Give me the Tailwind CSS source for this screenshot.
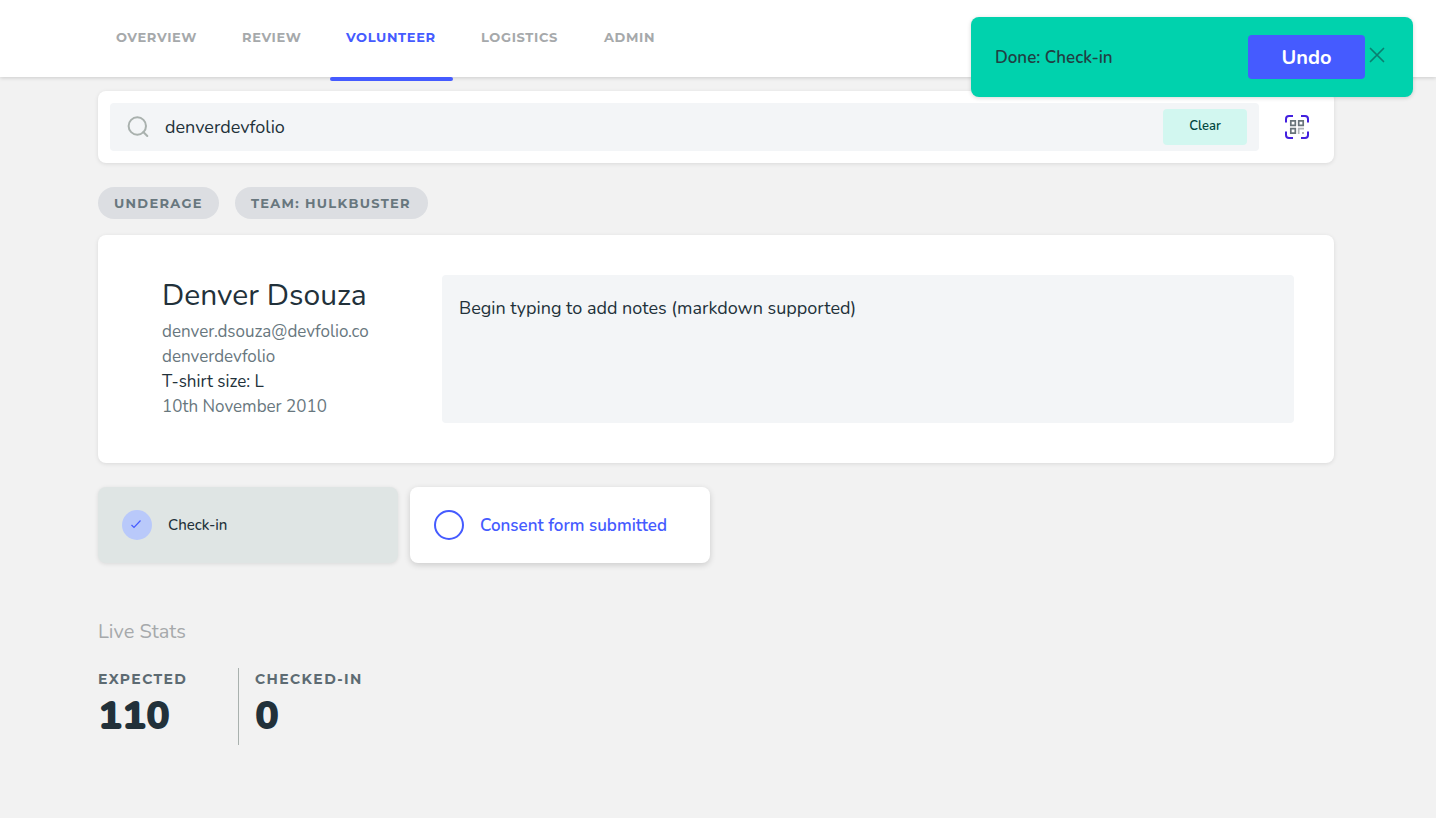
<!DOCTYPE html>
<html lang="en">
<head>
<meta charset="utf-8">
<meta name="viewport" content="width=device-width, initial-scale=1">
<title>Volunteer check-in</title>
<script src="https://cdn.jsdelivr.net/npm/@tailwindcss/browser@4"></script>
</head>
<body class="min-h-screen bg-[#f2f2f2] font-[Nunito,Roboto,sans-serif] text-[17px] text-[#22313a]">
<header class="h-[77px] bg-white shadow-[0_1px_4px_rgba(0,0,0,0.16)]">
  <nav aria-label="Main" class="ml-[100px] flex h-full gap-3 font-[Montserrat,Inter,sans-serif] text-[13px] leading-[18px] font-bold tracking-wider text-[#a6a9ab]">
    <a href="#" class="h-full min-w-[114px] px-4 pt-7">OVERVIEW</a>
    <a href="#" class="h-full min-w-[92px] px-4 pt-7">REVIEW</a>
    <a href="#" aria-current="page" class="relative h-full min-w-[123px] px-4 pt-7 text-[#455bff]">VOLUNTEER<span class="absolute inset-x-0 top-full h-1 rounded-xs bg-[#455bff]"></span></a>
    <a href="#" class="h-full min-w-[111px] px-4 pt-7">LOGISTICS</a>
    <a href="#" class="h-full px-4 pt-7">ADMIN</a>
  </nav>
</header>

<div role="status" class="absolute top-[17px] right-[23px] flex h-20 w-[442px] items-center rounded-lg bg-[#00d2ad] pr-7 pl-6 shadow-[0_1px_4px_rgba(0,0,0,0.16)]">
  <p class="grow pt-0.5 font-semibold text-[#204043]">Done: Check-in</p>
  <button class="mr-1 h-11 w-[117px] rounded-sm bg-[#455bff] pt-0.5 text-xl font-bold text-white">Undo</button>
  <button aria-label="Close" class="mb-1"><svg class="size-4" viewBox="0 0 16 16" fill="none" stroke="#0a7f70" stroke-width="1.7" stroke-linecap="round"><path d="M1.5 1.5l13 13M14.5 1.5l-13 13"/></svg></button>
</div>

<main class="mr-[102px] ml-[98px] pt-3.5 pb-16">
  <form class="flex items-center rounded-lg bg-white p-3 pr-[25px] shadow-[0_1px_4px_rgba(0,0,0,0.1)]">
    <div class="flex h-12 grow items-center rounded-sm bg-[#f3f5f7] pr-3 pl-[17px]">
      <svg class="size-[22px] shrink-0" viewBox="0 0 22 22" fill="none" stroke="#a9b1ae" stroke-width="2" stroke-linecap="round"><circle cx="10.300" cy="10" r="8.7"/><path d="M16.300 16l4 4"/></svg>
      <input aria-label="Search" value="denverdevfolio" class="ml-4 min-w-0 grow bg-transparent text-lg outline-none">
      <button type="button" class="h-9 w-[84px] rounded-sm bg-[#d2f7f0] text-[13px] font-semibold text-[#00483f]">Clear</button>
    </div>
    <button type="button" aria-label="Scan QR code" class="ml-[26px]">
      <svg class="size-6" viewBox="0 0 24 24" fill="none">
        <path d="M1 7.500V4a3 3 0 0 1 3-3h4M16 1h4a3 3 0 0 1 3 3v3.500M1 16.500V20a3 3 0 0 0 3 3h4M16 23h4a3 3 0 0 0 3-3v-3.500" stroke="#4320df" stroke-width="2"/>
        <path d="M5.800 5.800h4.500v4.500H5.800zM13.700 5.800h4.500v4.500h-4.500zM5.800 13.700h4.500v4.500H5.800z" stroke="#69747a" stroke-width="1.700"/>
        <path d="M13.700 19v-5.300H19" stroke="#b1b5b8" stroke-width="1.700"/><path d="M17 17h2v2h-2z" fill="#b1b5b8"/>
      </svg>
    </button>
  </form>

  <ul class="mt-6 flex gap-4 font-[Montserrat,Inter,sans-serif] text-[13px] leading-8 font-bold tracking-widest text-[#68777e]">
    <li class="min-w-[121px] rounded-full bg-[#dcdee2] px-4">UNDERAGE</li>
    <li class="min-w-[193px] rounded-full bg-[#dcdee2] px-4">TEAM: HULKBUSTER</li>
  </ul>

  <section class="mt-4 flex rounded-lg bg-white p-10 shadow-[0_1px_4px_rgba(0,0,0,0.1)]">
    <div class="w-[304px] shrink-0 pl-6 leading-[25px] text-[#68777e]">
      <h1 class="mb-0.5 text-3xl leading-[42px] text-[#22313a]">Denver Dsouza</h1>
      <p>denver.dsouza@devfolio.co</p>
      <p>denverdevfolio</p>
      <p class="text-[#22313a]">T-shirt size: L</p>
      <p>10th November 2010</p>
    </div>
    <textarea aria-label="Notes" placeholder="Begin typing to add notes (markdown supported)" class="block h-[148px] min-w-0 grow resize-none rounded-sm bg-[#f3f5f7] px-[17px] py-5 text-lg leading-[26px] outline-none placeholder:text-[#22313a]"></textarea>
  </section>

  <div class="mt-6 flex gap-3">
    <button class="flex h-[76px] w-[300px] items-center gap-4 rounded-lg bg-[#dfe5e4] px-6 text-[15px] font-medium shadow-[0_1px_4px_rgba(0,0,0,0.1)]">
      <svg class="size-[30px]" viewBox="0 0 30 30" fill="none"><circle cx="15" cy="15" r="15" fill="#b9c9fa"/><path d="M9.500 15l2.500 2.500 6.500-7" stroke="#455bff" stroke-width="1.200"/></svg>
      Check-in
    </button>
    <button class="flex h-[76px] w-[300px] items-center gap-4 rounded-lg bg-white px-6 font-semibold text-[#455bff] shadow-[0_2px_6px_rgba(0,0,0,0.16)]">
      <svg class="size-[30px]" viewBox="0 0 30 30" fill="none"><circle cx="15" cy="15" r="14" stroke="#455bff" stroke-width="2"/></svg>
      <span class="pt-0.5">Consent form submitted</span>
    </button>
  </div>

  <h2 class="mt-[55px] text-xl leading-7 text-[#a6a9ab]">Live Stats</h2>
  <dl class="mt-[22px] flex">
    <div class="h-[77px] w-[141px] border-r border-[#a9b1ae]">
      <dt class="font-[Montserrat,Inter,sans-serif] text-sm leading-[22px] font-bold tracking-widest text-[#5d6b72]">EXPECTED</dt>
      <dd class="text-[40px] leading-[53px] font-black">110</dd>
    </div>
    <div class="pl-4">
      <dt class="font-[Montserrat,Inter,sans-serif] text-sm leading-[22px] font-bold tracking-widest text-[#5d6b72]">CHECKED-IN</dt>
      <dd class="text-[40px] leading-[53px] font-black">0</dd>
    </div>
  </dl>
</main>
</body>
</html>
